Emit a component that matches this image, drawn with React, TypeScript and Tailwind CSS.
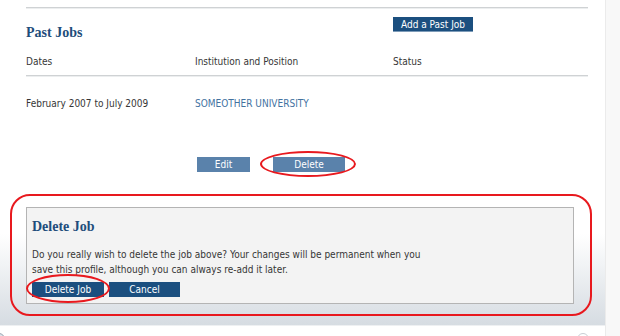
const sans = "font-['DejaVu_Sans_Condensed','Liberation_Sans',sans-serif]"
const serif = "font-['Liberation_Serif',serif] font-bold text-[14px] leading-[16px] text-[#1e4d7b]"

function Rule() {
  return (
    <div>
      <div className="h-px bg-[#cfd2d4]" />
      <div className="h-px bg-[#eceeef]" />
    </div>
  )
}

function App() {
  return (
    <div className={`w-[620px] h-[336px] overflow-hidden flex bg-white text-[10px] leading-[14px] text-[#363636] ${sans}`}>
      <div className="w-[605px] flex flex-col">
        <div className="flex-1 bg-linear-to-b from-white from-[72%] to-[#d6dce2] pb-[9px]">
          <div className="pl-[26px] pr-[17px] pt-[7px]">
            <Rule />

            <div className="grid grid-cols-[169px_198px_1fr] pt-[8px]">
              <h2 className={`col-span-2 mt-[8px] ${serif}`}>Past Jobs</h2>
              <div>
                <button className="w-[80px] h-[15px] bg-[#1b4f7f] text-white text-[10px] leading-[15px] border-b border-[#7d9bb8]">
                  Add a Past Job
                </button>
              </div>
            </div>

            <div className="grid grid-cols-[169px_198px_1fr] pt-[14px] pb-[6px]">
              <div>Dates</div>
              <div>Institution and Position</div>
              <div>Status</div>
            </div>
            <Rule />

            <div className="grid grid-cols-[169px_198px_1fr] pt-[20px]">
              <div>February 2007 to July 2009</div>
              <div className="text-[#43729f]">SOMEOTHER UNIVERSITY</div>
              <div />
            </div>

            <div className="grid grid-cols-[169px_198px_1fr] pt-[46px]">
              <div />
              <div className="flex gap-[23px] pl-[2px]">
                <button className="w-[53px] h-[15px] bg-[#5a82ab] text-white leading-[15px]">Edit</button>
                <div className="relative">
                  <button className="w-[72px] h-[15px] bg-[#5a82ab] text-white leading-[15px]">Delete</button>
                  <div className="absolute -left-[13px] -right-[11px] -top-[6px] -bottom-[5px] rounded-[50%] border-2 border-[#e8191e]" />
                </div>
              </div>
              <div />
            </div>
          </div>

          <div className="ml-[10px] w-[582px] mt-[22px] border-2 border-[#e8191e] rounded-[20px] pl-[14px] pr-[16px] pt-[11px] pb-[10px]">
            <div className="bg-[#f3f3f3] border border-[#b4b4b4] pl-[5px] pt-[11px] pb-[6px]">
              <h3 className={serif}>Delete Job</h3>
              <p className="mt-[12px] leading-[15px]">
                Do you really wish to delete the job above? Your changes will be permanent when you
                <br />
                save this profile, although you can always re-add it later.
              </p>
              <div className="flex gap-[5px] mt-[5px]">
                <div className="relative">
                  <button className="w-[72px] h-[15px] bg-[#1b4f7f] text-white leading-[15px]">Delete Job</button>
                  <div className="absolute -left-[6px] -right-[6px] -top-[8px] -bottom-[6px] rounded-[50%] border-2 border-[#e8191e]" />
                </div>
                <button className="w-[71px] h-[15px] bg-[#1b4f7f] text-white leading-[15px]">Cancel</button>
              </div>
            </div>
          </div>
        </div>

        <div className="h-[11px] bg-white border-t border-[#eef0f2] flex justify-between overflow-hidden">
          <div className="-ml-[7px] mt-[7px] w-[12px] h-[12px] rounded-full border border-[#9aa6b2] bg-[#dfe5eb]" />
          <div className="mr-[16px] mt-[7px] w-[12px] h-[12px] rounded-full border border-[#c8ced4] bg-white" />
        </div>
      </div>

      <div className="flex-1 bg-[#f8f8f8] border-l border-[#ebebeb]" />
    </div>
  )
}

export default App
